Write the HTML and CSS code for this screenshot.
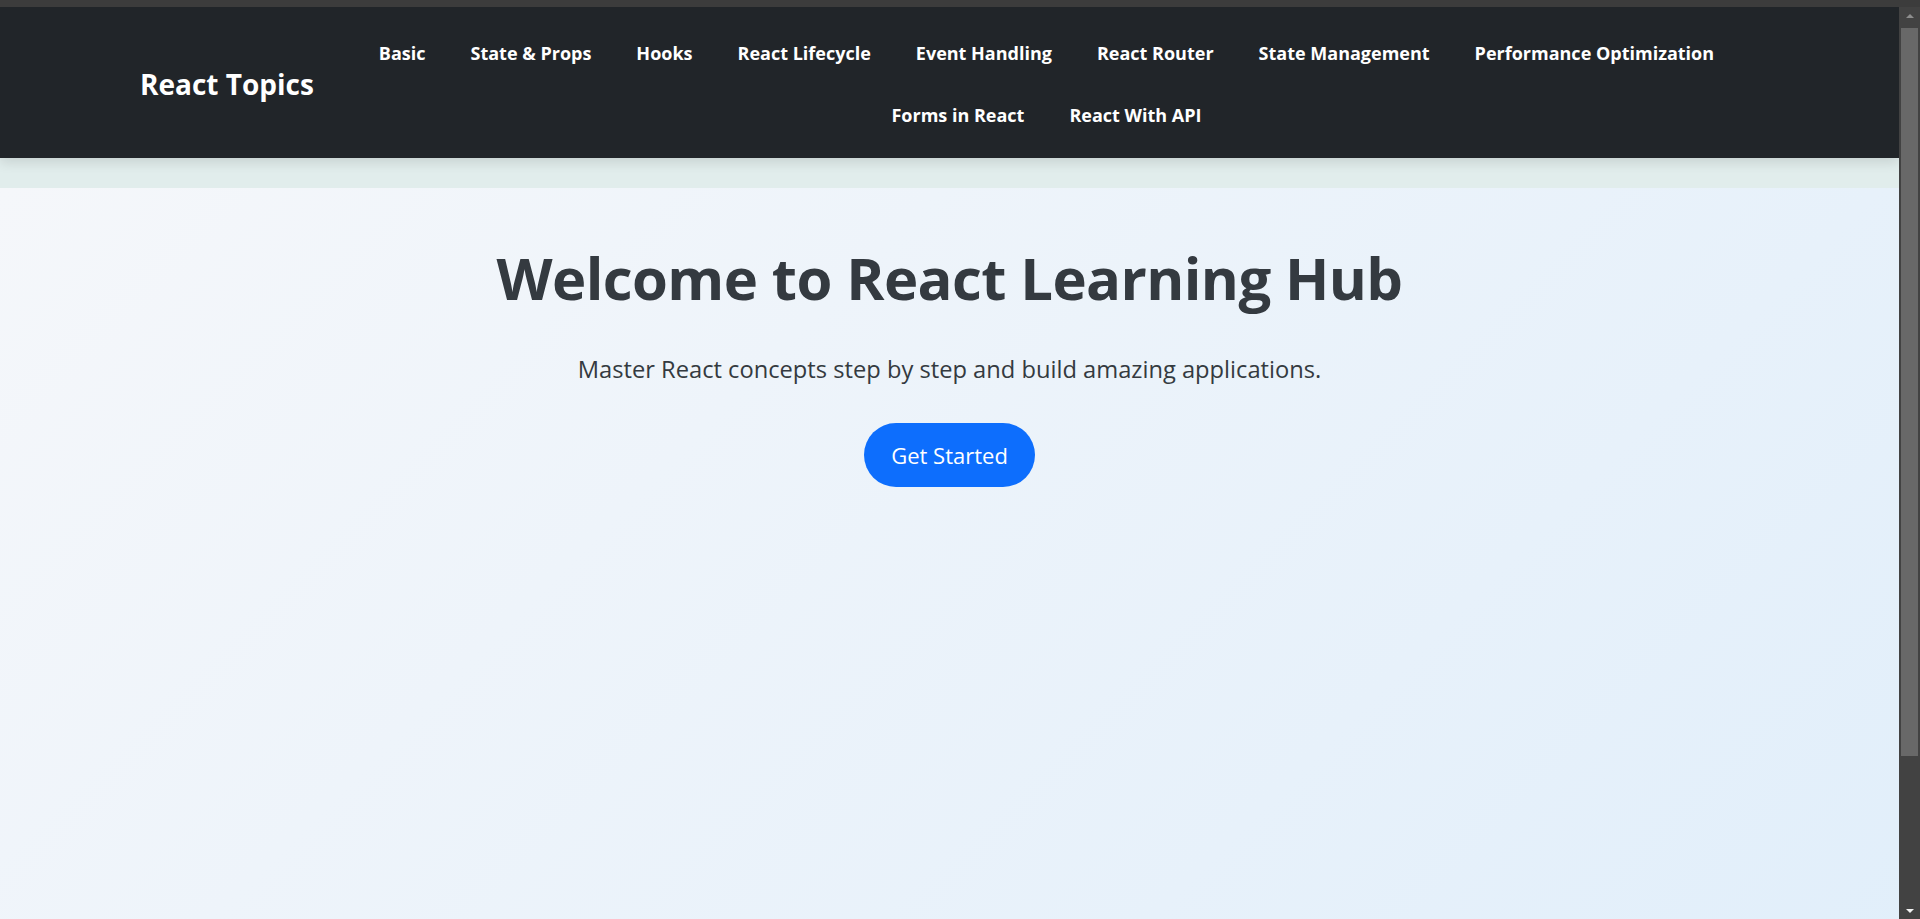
FILE: index.html
```html
<!DOCTYPE html>
<html lang="en">
<head>
<meta charset="utf-8">
<title>React Learning Hub</title>
<link rel="stylesheet" href="styles.css">
</head>
<body>
<div class="window-bar"></div>
<div class="window">
  <div class="page">
    <nav class="navbar">
      <a class="brand" href="#">React Topics</a>
      <ul class="nav-links">
        <li><a href="#">Basic</a></li>
        <li><a href="#">State &amp; Props</a></li>
        <li><a href="#">Hooks</a></li>
        <li><a href="#">React Lifecycle</a></li>
        <li><a href="#">Event Handling</a></li>
        <li><a href="#">React Router</a></li>
        <li><a href="#">State Management</a></li>
        <li><a href="#">Performance Optimization</a></li>
        <li><a href="#">Forms in React</a></li>
        <li><a href="#">React With API</a></li>
      </ul>
    </nav>
    <main class="hero">
      <h1 class="hero-title">Welcome to React Learning Hub</h1>
      <p class="hero-lead">Master React concepts step by step and build amazing applications.</p>
      <a class="btn-start" href="#">Get Started</a>
    </main>
  </div>
  <div class="scrollbar" aria-hidden="true">
    <div class="sb-arrow sb-up"></div>
    <div class="sb-track"><div class="sb-thumb"></div></div>
    <div class="sb-arrow sb-down"></div>
  </div>
</div>
</body>
</html>
```
FILE: styles.css
```css
html, body {
  margin: 0;
  height: 100%;
  overflow: hidden;
}

body {
  display: flex;
  flex-direction: column;
  background: #3c3c3c;
  font-family: "Open Sans", "Noto Sans", sans-serif;
}

.window-bar {
  flex: none;
  height: 7px;
  background: #3c3c3c;
}

.window {
  flex: 1;
  min-height: 0;
  display: flex;
}

.page {
  flex: 1;
  min-width: 0;
  overflow: hidden;
  background: #e1edec;
}

/* scrollbar column */
.scrollbar {
  flex: none;
  width: 21px;
  display: flex;
  flex-direction: column;
  background: #424242;
}

.sb-arrow {
  flex: none;
  height: 17px;
  display: flex;
  align-items: center;
  justify-content: center;
}

.sb-up::before,
.sb-down::before {
  content: "";
  width: 0;
  height: 0;
  border-left: 4px solid transparent;
  border-right: 4px solid transparent;
}

.sb-up::before {
  border-bottom: 4px solid #8d8d8d;
}

.sb-down::before {
  border-top: 4px solid #f2f2f2;
}

.sb-track {
  flex: 1;
}

.sb-thumb {
  height: 728px;
  margin: 4px 2px 0;
  background: #686868;
}

/* navbar */
.navbar {
  position: relative;
  z-index: 1;
  display: flex;
  align-items: center;
  padding: 14.5px 140px 12.5px;
  background: #212529;
  box-shadow: 0 4px 12px rgba(0, 0, 0, 0.12);
}

.brand {
  flex: none;
  margin-right: 20px;
  color: #fff;
  font-size: 28px;
  font-weight: 700;
  text-decoration: none;
  white-space: nowrap;
}

.nav-links {
  flex: 1;
  display: flex;
  flex-wrap: wrap;
  justify-content: center;
  list-style: none;
  margin: 0;
  padding: 0;
}

.nav-links a {
  display: block;
  padding: 17px 22.5px;
  line-height: 28px;
  color: #fff;
  font-size: 18px;
  font-weight: 700;
  text-decoration: none;
  white-space: nowrap;
}

/* hero */
.hero {
  box-sizing: border-box;
  min-height: 919px;
  margin-top: 30px;
  padding-top: 54px;
  text-align: center;
  color: #343a40;
  background: linear-gradient(135deg, #f5f7fa 0%, #e0eefa 100%);
}

.hero-title {
  margin: 0 0 39px;
  font-size: 58px;
  font-weight: 700;
  letter-spacing: -0.6px;
  line-height: 72px;
}

.hero-lead {
  margin: 0 0 37px;
  font-size: 23.7px;
  line-height: 33px;
}

.btn-start {
  display: inline-block;
  padding: 18px 27px;
  line-height: 28px;
  font-size: 22px;
  color: #fff;
  background: #0d6efd;
  border-radius: 50px;
  text-decoration: none;
}
```
